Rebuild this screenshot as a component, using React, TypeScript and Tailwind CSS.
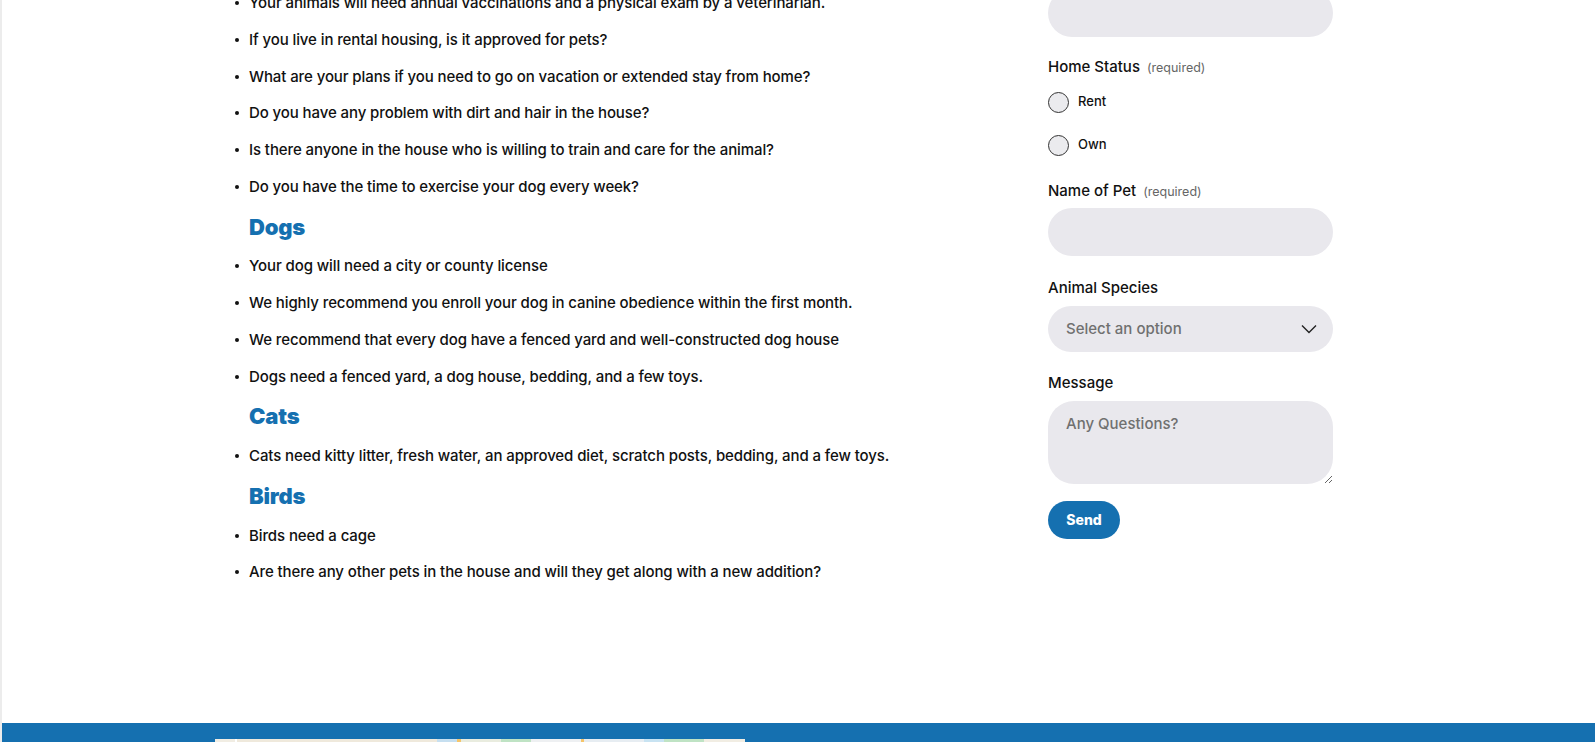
import React from "react";

const general = [
  "Your animals will need annual vaccinations and a physical exam by a veterinarian.",
  "If you live in rental housing, is it approved for pets?",
  "What are your plans if you need to go on vacation or extended stay from home?",
  "Do you have any problem with dirt and hair in the house?",
  "Is there anyone in the house who is willing to train and care for the animal?",
  "Do you have the time to exercise your dog every week?",
];
const dogs = [
  "Your dog will need a city or county license",
  "We highly recommend you enroll your dog in canine obedience within the first month.",
  "We recommend that every dog have a fenced yard and well-constructed dog house",
  "Dogs need a fenced yard, a dog house, bedding, and a few toys.",
];
const cats = [
  "Cats need kitty litter, fresh water, an approved diet, scratch posts, bedding, and a few toys.",
];
const birds = [
  "Birds need a cage",
  "Are there any other pets in the house and will they get along with a new addition?",
];

const sans = '"Inter", "Liberation Sans", Arial, sans-serif';

function Bullet({ text }: { text: string }) {
  return (
    <li className="flex items-center text-[15px] font-medium leading-[22px] tracking-[-0.1px] text-[#111]">
      <span className="ml-[2px] mr-[10px] h-[4px] w-[4px] shrink-0 rounded-full bg-[#111]" />
      <span>{text}</span>
    </li>
  );
}

function Heading({ children }: { children: React.ReactNode }) {
  return (
    <h2 className="pl-[16px] text-[22px] font-black leading-[28px] tracking-[-0.2px] text-[#1570b0]">
      {children}
    </h2>
  );
}

function Label({ text, required }: { text: string; required?: boolean }) {
  return (
    <div className="flex items-baseline leading-[20px]">
      <span className="text-[15px] font-medium text-[#111]">{text}</span>
      {required && (
        <span className="ml-[7px] text-[12.5px] font-normal text-[#666]">(required)</span>
      )}
    </div>
  );
}

function Radio({ text }: { text: string }) {
  return (
    <div className="flex h-[22px] items-center">
      <span className="h-[21px] w-[21px] rounded-full border-[1.5px] border-[#333] bg-[#ebebee]" />
      <span className="ml-[9px] text-[13px] font-medium text-[#111]">{text}</span>
    </div>
  );
}

export default function App() {
  return (
    <div
      className="h-[742px] w-[1595px] overflow-hidden border-l-2 border-[#ececec] bg-white"
      style={{ fontFamily: sans }}
    >
      <div className="flex h-[723px] overflow-hidden">
        {/* left column */}
        <div className="w-[1046px] shrink-0 pl-[231px]">
          <ul className="mt-[-8px] flex flex-col gap-[14.75px]">
            {general.map((t) => (
              <Bullet key={t} text={t} />
            ))}
            <Heading>Dogs</Heading>
            {dogs.map((t) => (
              <Bullet key={t} text={t} />
            ))}
            <Heading>Cats</Heading>
            {cats.map((t) => (
              <Bullet key={t} text={t} />
            ))}
            <Heading>Birds</Heading>
            {birds.map((t) => (
              <Bullet key={t} text={t} />
            ))}
          </ul>
        </div>

        {/* form */}
        <div className="w-[285px] shrink-0">
          <div className="mt-[-11px] h-[47.5px] rounded-full bg-[#e9e8ed]" />
          <div className="mt-[20.5px]">
            <Label text="Home Status" required />
          </div>
          <div className="mt-[13px]">
            <Radio text="Rent" />
          </div>
          <div className="mt-[21px]">
            <Radio text="Own" />
          </div>
          <div className="mt-[24.5px]">
            <Label text="Name of Pet" required />
          </div>
          <div className="mt-[6px] h-[48px] rounded-full bg-[#e9e8ed]" />
          <div className="mt-[22.5px]">
            <Label text="Animal Species" />
          </div>
          <div className="mt-[8px] flex h-[46px] items-center justify-between rounded-full bg-[#e9e8ed] pl-[18px] pr-[16px]">
            <span className="text-[15px] font-medium text-[#707070]">Select an option</span>
            <svg width="16" height="10" viewBox="0 0 16 10" fill="none">
              <path d="M1 1.5 L8 8.5 L15 1.5" stroke="#222" strokeWidth="1.4" />
            </svg>
          </div>
          <div className="mt-[21px]">
            <Label text="Message" />
          </div>
          <textarea
            placeholder="Any Questions?"
            className="mt-[8px] block h-[83px] w-full rounded-[26px] bg-[#e9e8ed] px-[18px] pt-[12px] text-[15px] font-medium text-[#111] outline-none placeholder:text-[#707070]"
            style={{ fontFamily: sans }}
          />
          <button
            className="mt-[16.5px] flex h-[38.5px] w-[72px] items-center justify-center rounded-full bg-[#1570b0] text-[14px] font-extrabold text-white"
            style={{ fontFamily: sans }}
          >
            Send
          </button>
        </div>
      </div>

      {/* footer */}
      <div className="h-[19px] bg-[#1570b0] pl-[213px] pt-[16px]">
        <div className="flex h-[3px] w-[530px] overflow-hidden bg-[#f1ede3]">
          <div className="w-[20px] bg-[#f1ede3]" />
          <div className="w-[2px] bg-[#ffffff]" />
          <div className="w-[200px] bg-[#efe9dc]" />
          <div className="w-[20px] bg-[#c6dff0]" />
          <div className="w-[4px] bg-[#f5c56a]" />
          <div className="w-[40px] bg-[#e9ecdf]" />
          <div className="w-[30px] bg-[#bfe3c4]" />
          <div className="w-[50px] bg-[#eef0f2]" />
          <div className="w-[3px] bg-[#f5c56a]" />
          <div className="w-[60px] bg-[#e7edf2]" />
          <div className="w-[20px] bg-[#c8e3f2]" />
          <div className="w-[40px] bg-[#bfe3c4]" />
        </div>
      </div>
    </div>
  );
}
